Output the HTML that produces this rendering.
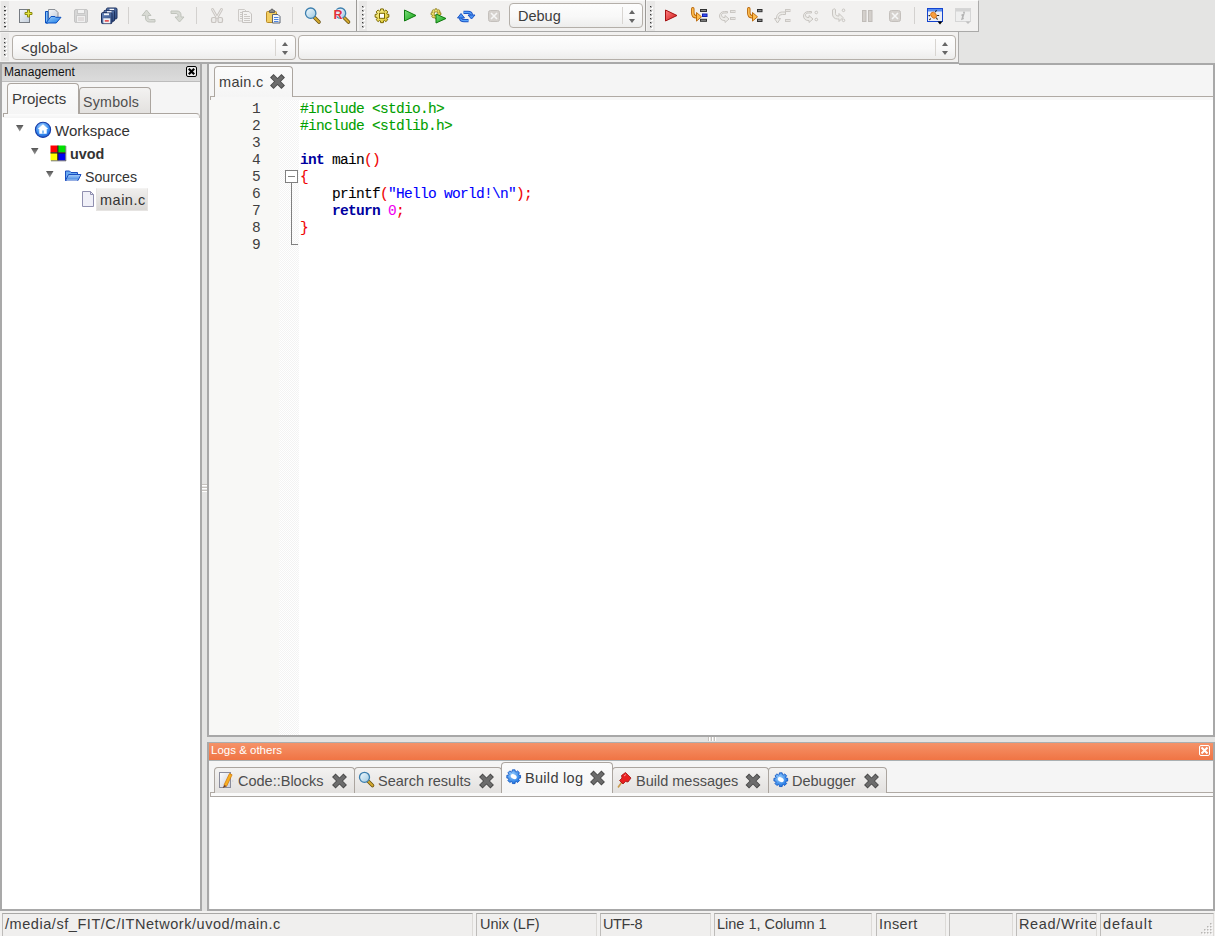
<!DOCTYPE html>
<html><head><meta charset="utf-8">
<style>
*{box-sizing:border-box;margin:0;padding:0}
html,body{width:1215px;height:936px;overflow:hidden;background:#e4e4e3;font-family:"Liberation Sans",sans-serif;color:#3c3c3c}
.a{position:absolute}
svg{position:absolute;overflow:visible}
.tb{position:absolute;background:#f2f1f0}
.grip{position:absolute;width:8px;background:#e8e7e6}
.grip i{position:absolute;left:3px;width:2px;height:2px;background:linear-gradient(135deg,#3a3a3a 50%,#b4b4b4 50%);box-shadow:1px 1px 0 #fff}
.vs{position:absolute;width:1px;background:#d3d1cf}
.combo{position:absolute;border:1px solid #b4afa9;border-radius:4px;background:linear-gradient(#fdfdfd,#f8f8f8 55%,#ededec)}
.spin{position:absolute;top:3px;bottom:3px;width:1px;background:#d8d5d1}
.ar{position:absolute;width:0;height:0;border-left:3.5px solid transparent;border-right:3.5px solid transparent}
.ar.u{border-bottom:4px solid #666}
.ar.d{border-top:4px solid #666}
.code{position:absolute;font-family:"Liberation Mono",monospace;font-size:14.5px;letter-spacing:-.7px;line-height:17px;-webkit-text-stroke:.1px currentColor;white-space:pre;color:#000}
.code b{-webkit-text-stroke:0}
.tab{position:absolute;border:1px solid #aba59f;border-bottom:none;border-radius:4px 4px 0 0;background:linear-gradient(#f3f2f1,#e3e1df)}
.tab.act{background:linear-gradient(#fbfbfb,#f5f5f5)}
.tab .tt{color:#4e4e4e}
.tab.act .tt{color:#3c3c3c}
.tt{position:absolute;font-size:14.5px;color:#3c3c3c;white-space:nowrap;line-height:17px}
.st{position:absolute;top:913px;height:23px;border-top:1px solid #a9a8a6;border-left:1px solid #bebcba;border-right:1px solid #dcdad7;background:#f0efee;font-size:14.5px;color:#3c3c3c;padding-left:3px;line-height:21px;white-space:nowrap;overflow:hidden}
</style></head><body>

<!-- ===== Toolbar row 1 ===== -->
<div class="tb" style="left:0;top:0;width:979px;height:32px;border-top:1px solid #fbfbfa;border-right:1px solid #acabaa;border-bottom:1px solid #a9a9a8"></div>
<div class="a" style="left:356px;top:0;width:1px;height:31px;background:#9c9a97"></div>
<div class="a" style="left:645px;top:0;width:1px;height:31px;background:#9c9a97"></div>
<div class="grip" style="left:1px;top:1px;height:30px"><i style="top:5px"></i><i style="top:9px"></i><i style="top:13px"></i><i style="top:17px"></i><i style="top:21px"></i><i style="top:25px"></i></div>
<div class="grip" style="left:359px;top:1px;height:30px"><i style="top:5px"></i><i style="top:9px"></i><i style="top:13px"></i><i style="top:17px"></i><i style="top:21px"></i><i style="top:25px"></i></div>
<div class="grip" style="left:647px;top:1px;height:30px"><i style="top:5px"></i><i style="top:9px"></i><i style="top:13px"></i><i style="top:17px"></i><i style="top:21px"></i><i style="top:25px"></i></div>
<div class="vs" style="left:128px;top:7px;height:17px"></div>
<div class="vs" style="left:196px;top:7px;height:17px"></div>
<div class="vs" style="left:292px;top:7px;height:17px"></div>
<div class="vs" style="left:914px;top:7px;height:17px"></div>

<div class="combo" style="left:509px;top:3px;width:134px;height:25px"><span class="a" style="left:8px;top:4px;font-size:14.5px;color:#3c3c3c">Debug</span><div class="spin" style="left:112px"></div><div class="ar u" style="left:119px;top:6px"></div><div class="ar d" style="left:119px;top:15px"></div></div>

<!--ICONS1-->
<svg width="979" height="32" style="left:0;top:0">
<defs>
<linearGradient id="gdoc" x1="0" y1="0" x2="1" y2="1"><stop offset="0" stop-color="#f6f8fb"/><stop offset="1" stop-color="#c3cedb"/></linearGradient>
<linearGradient id="gblue" x1="0" y1="0" x2="1" y2="1"><stop offset="0" stop-color="#9ccff8"/><stop offset="1" stop-color="#1c7ce8"/></linearGradient>
<linearGradient id="gglass" x1="0" y1="0" x2="1" y2="1"><stop offset="0" stop-color="#f4fbff"/><stop offset="1" stop-color="#9cc8e0"/></linearGradient>
<linearGradient id="ggreen" x1="0" y1="0" x2="1" y2="1"><stop offset="0" stop-color="#7ee07e"/><stop offset="1" stop-color="#10a010"/></linearGradient>
<linearGradient id="gred" x1="0" y1="0" x2="1" y2="1"><stop offset="0" stop-color="#ff8080"/><stop offset="1" stop-color="#d01818"/></linearGradient>
<linearGradient id="gyel" x1="0" y1="0" x2="1" y2="1"><stop offset="0" stop-color="#fff8a0"/><stop offset="1" stop-color="#d8c020"/></linearGradient>
</defs>
<!-- new file -->
<rect x="19.5" y="9.5" width="10" height="13" fill="url(#gdoc)" stroke="#767b82"/>
<path d="M27.5 10h2v2.5h2.5v2h-2.5v2.5h-2v-2.5h-2.5v-2h2.5z" fill="#e4e440" stroke="#8c8c10" stroke-width="1"/>
<!-- open -->
<path d="M48.5 9.5h6.5l3 3v6h-9.5z" fill="url(#gdoc)" stroke="#8c9096"/>
<path d="M45.5 11.5h2.5v11.5h-2.5z" fill="#82bef4" stroke="#0a50c0"/>
<path d="M46 23l5-6.5h4l.6.8h5.4l-4.8 5.7z" fill="url(#gblue)" stroke="#0a50c0" stroke-linejoin="round"/>
<!-- save disabled -->
<rect x="74.5" y="9.5" width="13" height="13" rx="1.5" fill="#d6d6d6" stroke="#c4c4c4"/>
<rect x="77.5" y="9.5" width="7" height="4" fill="#f2f2f2" stroke="#c8c8c8"/>
<rect x="76.5" y="15.5" width="9" height="7" fill="#efefef" stroke="#cacaca"/>
<path d="M78 18h6M78 20h6" stroke="#d0c8c8"/>
<!-- save all -->
<defs><linearGradient id="gfl" x1="0" y1="0" x2="1" y2="1"><stop offset="0" stop-color="#6a88bc"/><stop offset="1" stop-color="#2c4a80"/></linearGradient></defs>
<rect x="106.5" y="8" width="10.5" height="11" rx="1.2" fill="url(#gfl)" stroke="#1c2f5c"/>
<rect x="104" y="10.3" width="10.5" height="11" rx="1.2" fill="url(#gfl)" stroke="#1c2f5c"/>
<rect x="101.5" y="12.6" width="10.5" height="11" rx="1.2" fill="url(#gfl)" stroke="#1c2f5c"/>
<rect x="109.5" y="8.8" width="4.5" height="1.3" fill="#f4f6fa"/>
<rect x="107" y="11.1" width="4.5" height="1.3" fill="#f4f6fa"/>
<rect x="104" y="13.4" width="5" height="1.8" fill="#f4f6fa"/>
<rect x="103.3" y="18.3" width="7" height="5" fill="#eef0f4"/>
<rect x="104.8" y="20.2" width="4" height="1.4" fill="#e03030"/>
<!-- undo disabled -->
<path d="M142 15.5l4.5-5.5 4.5 5.5h-3v2c0 1.5 1 2 2.5 2h4.5v2.5h-5.5c-2.5 0-4-1.5-4-4v-2.5z" fill="#d8dad4" stroke="#c0c3bc"/>
<!-- redo disabled -->
<path d="M171 11h6c2.5 0 4 1.5 4 4v2h3l-4.5 5-4.5-5h3v-1.5c0-1.2-.8-2-2-2h-5z" fill="#d8dad4" stroke="#c0c3bc"/>
<!-- cut disabled -->
<path d="M212.5 9.5l4.5 8M221.5 9.5l-4.5 8" stroke="#cbc7c3" stroke-width="2.8" stroke-linecap="round"/>
<path d="M212.5 9.5l4.5 8M221.5 9.5l-4.5 8" stroke="#efedeb" stroke-width="1" stroke-linecap="round"/>
<rect x="211.5" y="17.5" width="4.5" height="5" rx="1.6" fill="#ecebe9" stroke="#c8c4c0" stroke-width="1.2"/>
<rect x="218" y="17.5" width="4.5" height="5" rx="1.6" fill="#ecebe9" stroke="#c8c4c0" stroke-width="1.2"/>
<!-- copy disabled -->
<path d="M238.5 9.5h6l2 2v9.5h-8z" fill="#f2f1f0" stroke="#cdcac7"/>
<path d="M242.5 11.5h6.5l2.5 2.5v8.5h-9z" fill="#f4f3f2" stroke="#c6c3c0"/>
<path d="M240 12.5h2M240 14.5h2M240 16.5h2M240 18.5h2M244 14.5h3M244 16.5h6M244 18.5h6M244 20.5h6" stroke="#cbc8c5"/>
<!-- paste -->
<rect x="266.5" y="11.5" width="10" height="11" rx="1" fill="#f2cd60" stroke="#b88a28"/>
<path d="M269.5 12.5v-2h1l1-1.5h1l1 1.5h1v2z" fill="#8a8a8a" stroke="#606060"/>
<path d="M272.5 14.5h5.5l2 2v6.5h-7.5z" fill="#f4f7fb" stroke="#5b6470"/>
<path d="M274 17.5h4.5M274 19.5h4.5M274 21.5h4.5" stroke="#3a78e0" stroke-width=".9"/>
<!-- find -->
<path d="M314.5 17.5l4.5 4.5" stroke="#6b5210" stroke-width="3.6" stroke-linecap="round"/>
<path d="M314.5 17.5l4.5 4.5" stroke="#d4aa30" stroke-width="2" stroke-linecap="round"/>
<circle cx="310.7" cy="13.2" r="5.2" fill="url(#gglass)" stroke="#3b7eae" stroke-width="1.3"/>
<!-- replace -->
<path d="M344 17.5l4.5 4.5" stroke="#6b5210" stroke-width="3.6" stroke-linecap="round"/>
<path d="M344 17.5l4.5 4.5" stroke="#d4aa30" stroke-width="2" stroke-linecap="round"/>
<circle cx="340.5" cy="13.2" r="5.2" fill="url(#gglass)" stroke="#3b7eae" stroke-width="1.3"/>
<text x="333.6" y="19" font-family="Liberation Sans" font-weight="bold" font-size="12.5" fill="#e0303c" stroke="#fff" stroke-width=".6" paint-order="stroke">R</text>
<!-- build gear -->
<g transform="translate(382,15.8)">
<path id="gear" d="M5.04 -1.64 L6.87 -1.37 L6.87 1.37 L5.04 1.64 L4.72 2.41 L5.82 3.89 L3.89 5.82 L2.41 4.72 L1.64 5.04 L1.37 6.87 L-1.37 6.87 L-1.64 5.04 L-2.41 4.72 L-3.89 5.82 L-5.82 3.89 L-4.72 2.41 L-5.04 1.64 L-6.87 1.37 L-6.87 -1.37 L-5.04 -1.64 L-4.72 -2.41 L-5.82 -3.89 L-3.89 -5.82 L-2.41 -4.72 L-1.64 -5.04 L-1.37 -6.87 L1.37 -6.87 L1.64 -5.04 L2.41 -4.72 L3.89 -5.82 L5.82 -3.89 L4.72 -2.41z" fill="url(#gyel)" stroke="#7a6800" stroke-width="1"/>
<rect x="-2.5" y="-2.5" width="5" height="5" fill="#fff" stroke="#7a6800"/>
</g>
<!-- run -->
<path d="M404.5 10l11.5 5.5-11.5 5.5z" fill="url(#ggreen)" stroke="#0e7a0e"/>
<!-- build & run -->
<g transform="translate(436,13.8) scale(.72)"><use href="#gear"/><rect x="-2.5" y="-2.5" width="5" height="5" fill="#fff" stroke="#7a6800"/></g>
<path d="M436 14l10 4.5-10 4.5z" fill="url(#ggreen)" stroke="#0e7a0e"/>
<!-- rebuild -->
<g fill="none">
<path d="M463.5 12.3H468c2 0 3.3 1.2 3.5 2.7" stroke="#1c54c4" stroke-width="3.2"/>
<path d="M463.5 12.3H468c2 0 3.3 1.2 3.5 2.7" stroke="#5aa4fa" stroke-width="1.2"/>
<path d="M468.5 20.7H464c-2 0-3.3-1.2-3.5-2.7" stroke="#1c54c4" stroke-width="3.2"/>
<path d="M468.5 20.7H464c-2 0-3.3-1.2-3.5-2.7" stroke="#5aa4fa" stroke-width="1.2"/>
</g>
<path d="M468 15h7l-3.5 4z" fill="#4a94f4" stroke="#1c54c4"/>
<path d="M457.5 18h7l-3.5-4.5z" fill="#4a94f4" stroke="#1c54c4"/>
<!-- abort disabled -->
<rect x="488.5" y="10.5" width="11" height="11" rx="2" fill="#d5d1cd" stroke="#c4c0bc"/>
<path d="M491 13l6 6M497 13l-6 6" stroke="#f6f6f6" stroke-width="1.6"/>
<!-- debug continue -->
<path d="M665.5 10l11.5 5.5-11.5 5.5z" fill="url(#gred)" stroke="#a41010"/>
<!-- run to cursor -->
<path d="M692.8 8.8V13c0 2.3 1.4 3.8 3.8 3.8h1" fill="none" stroke="#b86200" stroke-width="3.4" stroke-linecap="round"/>
<path d="M692.8 8.8V13c0 2.3 1.4 3.8 3.8 3.8h1" fill="none" stroke="#fcbc50" stroke-width="1.7" stroke-linecap="round"/>
<path d="M696.5 12.5l5 4.3-5 4.3z" fill="#fcbc50" stroke="#b86200" stroke-width=".9" stroke-linejoin="round"/>
<rect x="700.5" y="9.5" width="6" height="2" fill="#8a8a8a" stroke="#333"/>
<rect x="702.5" y="14" width="4.5" height="2.5" fill="#3a50f0" stroke="#1020b0"/>
<rect x="700.5" y="19.3" width="6" height="2" fill="#8a8a8a" stroke="#333"/>
<!-- next line disabled -->
<path d="M727.5 11.5h-3c-3 0-5 2-5 4.5s2 4.5 4.5 4.5h1v2l4-3.5-4-3.5v2h-1c-1.5 0-2.5-1-2.5-2.3s1-2.2 2.5-2.2h3.5z" fill="#ecebe8" stroke="#c8c5c1"/>
<rect x="730.5" y="10.5" width="4.5" height="2" fill="#e6e4e1" stroke="#cbc8c4"/>
<rect x="730.5" y="17.5" width="4.5" height="2" fill="#e6e4e1" stroke="#cbc8c4"/>
<!-- step into -->
<path d="M748.8 8.8V13c0 2.3 1.4 3.8 3.8 3.8h1" fill="none" stroke="#b86200" stroke-width="3.4" stroke-linecap="round"/>
<path d="M748.8 8.8V13c0 2.3 1.4 3.8 3.8 3.8h1" fill="none" stroke="#fcbc50" stroke-width="1.7" stroke-linecap="round"/>
<path d="M752.5 12.5l5 4.3-5 4.3z" fill="#fcbc50" stroke="#b86200" stroke-width=".9" stroke-linejoin="round"/>
<rect x="757.5" y="9.5" width="4.5" height="2.2" fill="#8a8a8a" stroke="#333"/>
<rect x="757.5" y="19.3" width="4.5" height="2.2" fill="#8a8a8a" stroke="#333"/>
<!-- step out disabled -->
<path d="M783.5 14.5h-3c-2.5 0-4 1.5-4 3.5v.5h2l-3 4.5-3-4.5h2v-.5c0-3.5 2.5-6 6-6h3z" fill="#ecebe8" stroke="#c8c5c1" transform="translate(2,0)"/>
<rect x="785.5" y="9.5" width="4.5" height="2" fill="#e6e4e1" stroke="#cbc8c4"/>
<rect x="785.5" y="19.5" width="4.5" height="2" fill="#e6e4e1" stroke="#cbc8c4"/>
<!-- next instr disabled -->
<path d="M811.5 11.5h-3c-3 0-5 2-5 4.5s2 4.5 4.5 4.5h1v2l4-3.5-4-3.5v2h-1c-1.5 0-2.5-1-2.5-2.3s1-2.2 2.5-2.2h3.5z" fill="#ecebe8" stroke="#c8c5c1"/>
<circle cx="816.3" cy="12.5" r="1.3" fill="none" stroke="#c8c5c1"/>
<circle cx="816.3" cy="19.5" r="1.3" fill="none" stroke="#c8c5c1"/>
<!-- step into instr disabled -->
<path d="M833.5 9c1-.5 2 0 2 1v3.5c0 1.5 1 2.5 2.5 2.5h1v-2.5l4 4-4 4v-2.5h-1.5c-3 0-5-2-5-5v-4z" fill="#ecebe8" stroke="#c8c5c1"/>
<circle cx="843.5" cy="10.3" r="1.3" fill="none" stroke="#c8c5c1"/>
<circle cx="843.5" cy="20.3" r="1.3" fill="none" stroke="#c8c5c1"/>
<!-- pause disabled -->
<rect x="862.5" y="10.5" width="3.5" height="11" fill="#d3cfcb" stroke="#c0bcb8"/>
<rect x="868.5" y="10.5" width="3.5" height="11" fill="#d3cfcb" stroke="#c0bcb8"/>
<!-- stop disabled -->
<rect x="889.5" y="10.5" width="11" height="11" rx="2" fill="#d5d1cd" stroke="#c4c0bc"/>
<path d="M892 13l6 6M898 13l-6 6" stroke="#f6f6f6" stroke-width="1.6"/>
<!-- debug windows -->
<rect x="927.5" y="8.5" width="15" height="13" fill="#eceef4" stroke="#1444d0"/>
<rect x="928" y="9" width="14" height="2.5" fill="#5a8ef0"/>
<g stroke="#2a2a2a" stroke-width="1.1" stroke-linecap="round"><path d="M935.5 11.8l.8-1.3M937.5 15.5h1.2M936.5 18l.8 1.2M930.5 18.8l-.9.9M929.8 15.6h-.9"/></g>
<ellipse cx="933.6" cy="15.2" rx="2.5" ry="3.3" transform="rotate(-40 933.6 15.2)" fill="#f8a040" stroke="#d06a10" stroke-width=".8"/>
<path d="M937.5 21.5h5l-2.5 3z" fill="#000"/>
<!-- info disabled -->
<rect x="955.5" y="8.5" width="15" height="13" fill="#efefef" stroke="#d6d6d6"/>
<rect x="956" y="9" width="14" height="2.5" fill="#d4d4d4"/>
<path d="M961.5 15.5l2-1-1.3 4.3 1.5-.6" stroke="#b4b4b4" stroke-width="1.6" fill="none"/><circle cx="964" cy="12.4" r="1" fill="#b8b8b8"/>
<path d="M965.5 21.5h5l-2.5 2.5z" fill="#c0c0c0"/>
</svg>
<!--/ICONS1-->

<!-- ===== Toolbar row 2 ===== -->
<div class="tb" style="left:0;top:32px;width:959px;height:30px;border-right:1px solid #acabaa"></div>
<div class="grip" style="left:1px;top:33px;height:28px"><i style="top:5px"></i><i style="top:9px"></i><i style="top:13px"></i><i style="top:17px"></i><i style="top:21px"></i></div>
<div class="combo" style="left:12px;top:35px;width:284px;height:25px"><span class="a" style="left:8px;top:4px;font-size:14.5px;color:#3c3c3c;letter-spacing:.2px">&lt;global&gt;</span><div class="spin" style="left:262px"></div><div class="ar u" style="left:269px;top:6px"></div><div class="ar d" style="left:269px;top:15px"></div></div>
<div class="combo" style="left:298px;top:35px;width:658px;height:25px"><div class="spin" style="left:636px"></div><div class="ar u" style="left:643px;top:6px"></div><div class="ar d" style="left:643px;top:15px"></div></div>

<!-- ===== Management panel ===== -->
<div class="a" style="left:0;top:62px;width:202px;height:849px;border:2px solid #a9a9a9;background:#f5f5f5"></div>
<div class="a" style="left:2px;top:64px;width:198px;height:18px;background:linear-gradient(#d0d0d0,#dbdbdb);border-bottom:1px solid #bcbcbc"><span class="a" style="left:2px;top:2px;font-size:12px;color:#111;line-height:13px;letter-spacing:.1px">Management</span>
<div class="a" style="left:184px;top:2px;width:11px;height:11px;border:1px solid #000;border-radius:2px;background:#ececec"><svg width="9" height="9" style="left:0;top:0"><path d="M1.8 1.8L7.2 7.2M7.2 1.8L1.8 7.2" stroke="#000" stroke-width="2.2"/></svg></div></div>
<!-- notebook tabs -->
<div class="a" style="left:2px;top:117px;width:198px;height:792px;background:#fff"></div>
<div class="a" style="left:3px;top:113px;width:197px;height:5px;border-top:1px solid #aba59f;border-right:1px solid #c8c4c0;border-radius:0 4px 0 0;background:linear-gradient(#fcfcfc,#f4f4f4)"></div>
<div class="a" style="left:3px;top:113px;width:1px;height:4px;background:#aba59f"></div>
<div class="tab act" style="left:7px;top:83px;width:72px;height:31px;z-index:2;border-bottom:none"><span class="tt" style="left:4px;top:6px;font-size:15px">Projects</span></div>
<div class="tab" style="left:79px;top:87px;width:72px;height:26px"><span class="tt" style="left:3px;top:6px;font-size:14.2px;letter-spacing:.25px">Symbols</span></div>

<!--TREE-->
<svg width="200" height="120" style="left:0;top:110px">
<defs>
<linearGradient id="gtri" x1="0" y1="0" x2="0" y2="1"><stop offset="0" stop-color="#555"/><stop offset="1" stop-color="#9a9a9a"/></linearGradient>
<radialGradient id="gws" cx=".45" cy=".35" r=".7"><stop offset="0" stop-color="#bfe0ff"/><stop offset=".6" stop-color="#3a8ef0"/><stop offset="1" stop-color="#1a5ad0"/></radialGradient>
<linearGradient id="gfold" x1="0" y1="0" x2="0" y2="1"><stop offset="0" stop-color="#a8d0fa"/><stop offset="1" stop-color="#3a80e0"/></linearGradient>
</defs>
<path d="M16 15h7.5l-3.75 6.5z" fill="url(#gtri)"/>
<path d="M31 38h7.5l-3.75 6.5z" fill="url(#gtri)"/>
<path d="M46 61h7.5l-3.75 6.5z" fill="url(#gtri)"/>
<!-- workspace -->
<circle cx="43" cy="19.8" r="7.6" fill="url(#gws)" stroke="#1a3ea8" stroke-width="1.1"/>
<path d="M43 14.3l-5.2 4.6h1.5v4.8h7.4v-4.8h1.5z" fill="#fff"/>
<rect x="42" y="20.5" width="2" height="3.2" fill="#8cc0f4"/>
<!-- project -->
<rect x="50.5" y="35.5" width="7" height="7" fill="#f00"/>
<rect x="58" y="35.5" width="7.5" height="7" fill="#00e000"/>
<rect x="50.5" y="43" width="7" height="7.5" fill="#ff0"/>
<rect x="58" y="43" width="7.5" height="7.5" fill="#0000f0"/>
<path d="M57.8 35.5v15M50.5 42.8h15" stroke="#2a1a10" stroke-width="1.2"/>
<path d="M51 50.8h15M65.8 36v15" stroke="#555" stroke-width=".8"/>
<!-- folder -->
<path d="M65.5 70.5v-9.5h4l1.5 1.5h6.5v2" fill="#6aaaf0" stroke="#1a4ec0"/>
<path d="M65.5 70.5l3-6h12.5l-3 6z" fill="url(#gfold)" stroke="#1a4ec0"/>
<path d="M66.5 70.2h11" stroke="#fff" stroke-width=".8"/>
<!-- file -->
<path d="M82.5 81.5h8l3 3v12h-11z" fill="#f0f0f8" stroke="#9090b0"/>
<path d="M90.5 81.5v3h3" fill="none" stroke="#9090b0"/>
</svg>
<div class="a" style="left:96px;top:188px;width:52px;height:23px;background:linear-gradient(#f0efed,#dad8d5);border:1px solid #e6e4e2;border-top-color:#f4f3f2"></div>
<span class="tt" style="left:55px;top:122px;font-size:15px;color:#333">Workspace</span>
<span class="tt" style="left:70px;top:146px;font-size:14.4px;font-weight:bold;color:#333">uvod</span>
<span class="tt" style="left:85px;top:169px;font-size:14.2px;color:#333">Sources</span>
<span class="tt" style="left:100px;top:192px;font-size:14.5px;color:#333;letter-spacing:.5px">main.c</span>
<!--/TREE-->

<!-- ===== Editor notebook ===== -->
<div class="a" style="left:207px;top:62px;width:1008px;height:675px;border:2px solid #a8a8a8;background:#f5f5f5"></div>
<div class="a" style="left:210px;top:96px;width:1003px;height:639px;border-top:1px solid #b0aaa4;border-left:1px solid #b0aaa4;background:#f7f7f7"></div>
<div class="tab act" style="left:214px;top:66px;width:79px;height:31px"><span class="tt" style="left:4px;top:7px;letter-spacing:.3px">main.c</span></div>
<div class="a" style="left:210px;top:100px;width:1003px;height:635px;background:#fff"></div>
<div class="a" style="left:210px;top:100px;width:69px;height:635px;background:#f8f8f6"></div>
<div class="a" style="left:279px;top:100px;width:20px;height:635px;background:repeating-conic-gradient(#f3f3f3 0 25%,#fff 0 50%) 0 0/2px 2px"></div>
<div class="code" style="left:210px;top:101px;width:50px;text-align:right;color:#404040;-webkit-text-stroke:0">1
2
3
4
5
6
7
8
9</div>
<div class="code" style="left:300px;top:101px"><span style="color:#00a000">#include &lt;stdio.h&gt;</span>
<span style="color:#00a000">#include &lt;stdlib.h&gt;</span>

<b style="color:#0000a0">int</b> main<span style="color:#f00000">()</span>
<span style="color:#f00000">{</span>
    printf<span style="color:#f00000">(</span><span style="color:#0000ff">"Hello world!\n"</span><span style="color:#f00000">);</span>
    <b style="color:#0000a0">return</b> <span style="color:#f000f0">0</span><span style="color:#f00000">;</span>
<span style="color:#f00000">}</span>
</div>
<!-- fold markers -->
<div class="a" style="left:285px;top:170px;width:13px;height:13px;border:1px solid #808080;background:#fff"></div>
<div class="a" style="left:288px;top:176px;width:7px;height:1px;background:#808080"></div>
<div class="a" style="left:291px;top:183px;width:1px;height:62px;background:#808080"></div>
<div class="a" style="left:291px;top:244px;width:7px;height:1px;background:#808080"></div>

<!-- ===== Logs panel ===== -->
<div class="a" style="left:207px;top:742px;width:1008px;height:169px;border:2px solid #a8a8a8;border-top:1px solid #a9aeb0;background:#f5f5f5"></div>
<div class="a" style="left:209px;top:743px;width:1004px;height:18px;border-bottom:1px solid #aab0b2;background:linear-gradient(#f59268,#f07444)"><span class="a" style="left:2px;top:1px;font-size:11.5px;color:#fff;line-height:13px">Logs &amp; others</span>
<div class="a" style="left:990px;top:2px;width:11px;height:11px;border:1px solid #fff;border-radius:2px"><svg width="9" height="9" style="left:0;top:0"><path d="M1.5 1.5L7.5 7.5M7.5 1.5L1.5 7.5" stroke="#fff" stroke-width="2"/></svg></div></div>
<div class="a" style="left:210px;top:792px;width:1003px;height:117px;border-top:1px solid #b0aaa4;border-left:1px solid #b0aaa4;background:#fafafa"></div>
<div class="a" style="left:210px;top:796px;width:1003px;height:113px;border-top:1px solid #aca8a4;background:#fff"></div>
<div class="tab" style="left:214px;top:767px;width:141px;height:26px"><span class="tt" style="left:23px;top:5px">Code::Blocks</span></div>
<div class="tab" style="left:354px;top:767px;width:148px;height:26px"><span class="tt" style="left:23px;top:5px">Search results</span></div>
<div class="tab act" style="left:501px;top:762px;width:112px;height:31px"><span class="tt" style="left:23px;top:7px;letter-spacing:.3px">Build log</span></div>
<div class="tab" style="left:612px;top:767px;width:157px;height:26px"><span class="tt" style="left:23px;top:5px">Build messages</span></div>
<div class="tab" style="left:768px;top:767px;width:119px;height:26px"><span class="tt" style="left:23px;top:5px">Debugger</span></div>

<!--ICONS2-->
<svg width="1215" height="936" style="left:0;top:0">
<defs>
<linearGradient id="gx" x1="0" y1="0" x2="0" y2="1"><stop offset="0" stop-color="#6a6a6a"/><stop offset="1" stop-color="#4a4a4a"/></linearGradient>
<g id="xbtn"><path d="M1.8 1.8L13.2 13.2M13.2 1.8L1.8 13.2" stroke="#494949" stroke-width="5"/><path d="M2.5 2.5L12.5 12.5M12.5 2.5L2.5 12.5" stroke="#6c6c6c" stroke-width="3.4"/></g>
<linearGradient id="gglass2" x1="0" y1="0" x2="1" y2="1"><stop offset="0" stop-color="#f4fbff"/><stop offset="1" stop-color="#9cc8e0"/></linearGradient>
<radialGradient id="gbg" cx=".4" cy=".35" r=".7"><stop offset="0" stop-color="#9ad0ff"/><stop offset="1" stop-color="#1670e0"/></radialGradient>
</defs>
<!-- main.c close -->
<use href="#xbtn" x="270" y="74"/>
<!-- bottom tab closes -->
<use href="#xbtn" x="332" y="773.5"/>
<use href="#xbtn" x="479" y="773.5"/>
<use href="#xbtn" x="590" y="770.5"/>
<use href="#xbtn" x="745.5" y="773.5"/>
<use href="#xbtn" x="864" y="773.5"/>
<!-- codeblocks pencil -->
<defs><linearGradient id="gpdoc" x1="0" y1="0" x2="1" y2="1"><stop offset="0" stop-color="#fff"/><stop offset="1" stop-color="#c8ccd8"/></linearGradient></defs>
<rect x="219.5" y="772.5" width="11" height="15" fill="url(#gpdoc)" stroke="#8a8c9c"/>
<path d="M224 785l5.5-11.5 2.6 1.3-5.5 11.5z" fill="#f8b020" stroke="#d07000" stroke-width=".7"/>
<path d="M222.8 788l1.2-3 2.6 1.3z" fill="#704020"/>
<path d="M232.5 780l1 1-1 1z" fill="#c8c8c8"/>
<!-- magnifier -->
<path d="M368 781l4.5 4.5" stroke="#6b5210" stroke-width="3.6" stroke-linecap="round"/>
<path d="M368 781l4.5 4.5" stroke="#d4aa30" stroke-width="2" stroke-linecap="round"/>
<circle cx="364.5" cy="777.3" r="5" fill="url(#gglass2)" stroke="#3b7eae" stroke-width="1.3"/>
<!-- build log gear -->
<g transform="translate(513.7,776.7)"><path d="M5.04 -1.64 L6.87 -1.37 L6.87 1.37 L5.04 1.64 L4.72 2.41 L5.82 3.89 L3.89 5.82 L2.41 4.72 L1.64 5.04 L1.37 6.87 L-1.37 6.87 L-1.64 5.04 L-2.41 4.72 L-3.89 5.82 L-5.82 3.89 L-4.72 2.41 L-5.04 1.64 L-6.87 1.37 L-6.87 -1.37 L-5.04 -1.64 L-4.72 -2.41 L-5.82 -3.89 L-3.89 -5.82 L-2.41 -4.72 L-1.64 -5.04 L-1.37 -6.87 L1.37 -6.87 L1.64 -5.04 L2.41 -4.72 L3.89 -5.82 L5.82 -3.89 L4.72 -2.41z" fill="url(#gbg)" stroke="#0a50c0" stroke-width=".8"/><ellipse cx="0" cy="0" rx="3.2" ry="2.2" transform="rotate(30)" fill="#fff"/></g>
<!-- debugger gear -->
<g transform="translate(780.8,779.7)"><path d="M5.04 -1.64 L6.87 -1.37 L6.87 1.37 L5.04 1.64 L4.72 2.41 L5.82 3.89 L3.89 5.82 L2.41 4.72 L1.64 5.04 L1.37 6.87 L-1.37 6.87 L-1.64 5.04 L-2.41 4.72 L-3.89 5.82 L-5.82 3.89 L-4.72 2.41 L-5.04 1.64 L-6.87 1.37 L-6.87 -1.37 L-5.04 -1.64 L-4.72 -2.41 L-5.82 -3.89 L-3.89 -5.82 L-2.41 -4.72 L-1.64 -5.04 L-1.37 -6.87 L1.37 -6.87 L1.64 -5.04 L2.41 -4.72 L3.89 -5.82 L5.82 -3.89 L4.72 -2.41z" fill="url(#gbg)" stroke="#0a50c0" stroke-width=".8"/><ellipse cx="0" cy="0" rx="3.2" ry="2.2" transform="rotate(30)" fill="#fff"/></g>
<!-- pin -->
<path d="M618 787.5l5-7" stroke="#c89a50" stroke-width="1.6"/>
<path d="M621.5 775.5l4-3 5.5 5.5-3 4-2.5-.5-2.5 2.5-3.5-3.5 2.5-2.5z" fill="#e82020" stroke="#a01010" stroke-width=".8"/>
<path d="M624 776l2-1.5" stroke="#ff9090" stroke-width="1"/>
</svg>
<!--/ICONS2-->

<!-- top border tweaks -->
<div class="a" style="left:0;top:62px;width:1215px;height:2px;background:#a9a9a9"></div>
<div class="a" style="left:959px;top:62px;width:256px;height:1px;background:#e4e4e3"></div>
<div class="a" style="left:959px;top:64px;width:254px;height:1px;background:#a8a8a8"></div>
<!-- splitter grips -->
<div class="a" style="left:202px;top:484px;width:5px;height:1px;background:#c6c2be;box-shadow:0 1px 0 #fff,0 3px 0 #c6c2be,0 4px 0 #fff,0 6px 0 #c6c2be,0 7px 0 #fff"></div>
<div class="a" style="left:708px;top:737px;width:1px;height:4px;background:#c6c2be;box-shadow:1px 0 0 #fff,3px 0 0 #c6c2be,4px 0 0 #fff,6px 0 0 #c6c2be,7px 0 0 #fff"></div>
<!-- ===== Status bar ===== -->
<div class="a" style="left:0;top:911px;width:1215px;height:25px;background:#f2f1f0"></div>
<div class="st" style="left:2px;width:471px;padding-left:2px;letter-spacing:.55px">/media/sf_FIT/C/ITNetwork/uvod/main.c</div>
<div class="st" style="left:476px;width:121px">Unix (LF)</div>
<div class="st" style="left:600px;width:111px;letter-spacing:-.4px;padding-left:2px">UTF-8</div>
<div class="st" style="left:714px;width:158px;padding-left:2px">Line 1, Column 1</div>
<div class="st" style="left:876px;width:70px;padding-left:2px;letter-spacing:.4px">Insert</div>
<div class="st" style="left:949px;width:64px"></div>
<div class="st" style="left:1016px;width:81px;padding-left:2px;letter-spacing:.65px">Read/Write</div>
<div class="st" style="left:1100px;width:114px;padding-left:2px;letter-spacing:.9px">default</div>

<svg width="1215" height="936" style="left:0;top:0"><g fill="#fff"><rect x="1211" y="924" width="1.5" height="1.5"/><rect x="1208" y="927" width="1.5" height="1.5"/><rect x="1211" y="927" width="1.5" height="1.5"/><rect x="1205" y="930" width="1.5" height="1.5"/><rect x="1208" y="930" width="1.5" height="1.5"/><rect x="1211" y="930" width="1.5" height="1.5"/><rect x="1202" y="933" width="1.5" height="1.5"/><rect x="1205" y="933" width="1.5" height="1.5"/><rect x="1208" y="933" width="1.5" height="1.5"/><rect x="1211" y="933" width="1.5" height="1.5"/></g><g fill="#b8b6b3"><rect x="1210" y="923" width="1.5" height="1.5"/><rect x="1207" y="926" width="1.5" height="1.5"/><rect x="1210" y="926" width="1.5" height="1.5"/><rect x="1204" y="929" width="1.5" height="1.5"/><rect x="1207" y="929" width="1.5" height="1.5"/><rect x="1210" y="929" width="1.5" height="1.5"/><rect x="1201" y="932" width="1.5" height="1.5"/><rect x="1204" y="932" width="1.5" height="1.5"/><rect x="1207" y="932" width="1.5" height="1.5"/><rect x="1210" y="932" width="1.5" height="1.5"/></g></svg>
</body></html>
